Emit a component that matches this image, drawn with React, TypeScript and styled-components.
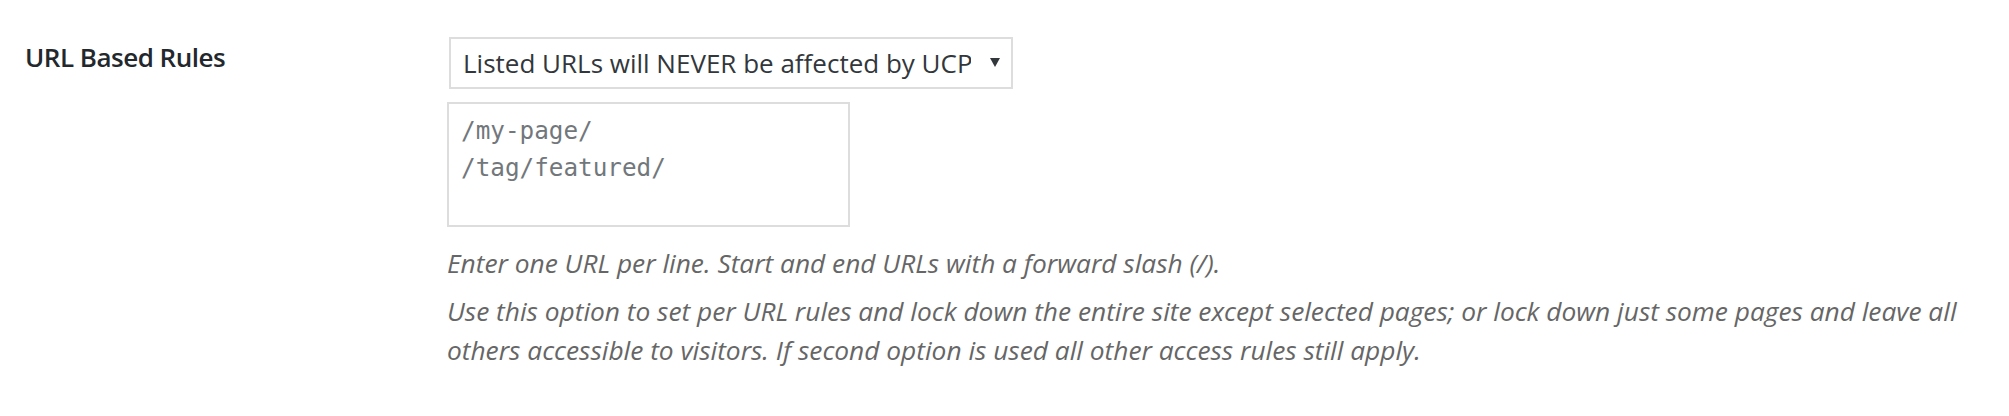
import React from "react";
import styled, { createGlobalStyle } from "styled-components";

const GlobalStyle = createGlobalStyle`
  html, body {
    margin: 0;
    padding: 0;
    background: #ffffff;
  }
  body {
    font-family: "Open Sans", "Noto Sans", sans-serif;
    -webkit-font-smoothing: antialiased;
  }
`;

const FormRow = styled.div`
  display: grid;
  grid-template-columns: 422px 1fr;
  padding: 37px 15px 0 25px;
  box-sizing: border-box;
  width: 2009px;
`;

const Label = styled.label`
  margin-top: 2px;
  font-family: "Open Sans", "Noto Sans", sans-serif;
  font-weight: 600;
  font-size: 26px;
  letter-spacing: -0.5px;
  line-height: 36px;
  color: #23282d;
`;

const Field = styled.div`
  display: flex;
  flex-direction: column;
  align-items: flex-start;
`;

const SelectWrap = styled.div`
  position: relative;
  margin-left: 2px;
  width: 564px;
`;

const Select = styled.select`
  appearance: none;
  -webkit-appearance: none;
  display: block;
  width: 100%;
  height: 52px;
  box-sizing: border-box;
  border: 2px solid #dddddd;
  border-radius: 0;
  background: #ffffff;
  padding: 0 40px 0 12px;
  margin: 0;
  font-family: "Open Sans", "Noto Sans", sans-serif;
  font-size: 26px;
  line-height: 36px;
  color: #32373c;
  outline: none;
`;

const Arrow = styled.svg`
  position: absolute;
  right: 13px;
  top: 20px;
  width: 10px;
  height: 10px;
  pointer-events: none;
`;

const Area = styled.textarea`
  display: block;
  width: 403px;
  height: 125px;
  box-sizing: border-box;
  margin: 13px 0 0 0;
  padding: 9px 12px;
  border: 2px solid #dddddd;
  border-radius: 0;
  background: #ffffff;
  resize: none;
  outline: none;
  font-family: "DejaVu Sans Mono", "Liberation Mono", monospace;
  font-size: 24.3px;
  line-height: 36.7px;
  color: #72777c;
  &::placeholder {
    color: #72777c;
    opacity: 1;
  }
`;

const Description = styled.p<{ $first?: boolean }>`
  margin: ${(p) => (p.$first ? "17px" : "10px")} 0 0 0;
  font-family: "Open Sans", "Noto Sans", sans-serif;
  font-style: italic;
  font-size: 26.3px;
  line-height: 38.3px;
  color: #666666;
`;

export default function App() {
  return (
    <>
      <GlobalStyle />
      <FormRow>
        <Label htmlFor="ucp-url-rules">URL Based Rules</Label>
        <Field>
          <SelectWrap>
            <Select id="ucp-url-rules" defaultValue="never">
              <option value="never">Listed URLs will NEVER be affected by UCP</option>
              <option value="only">ONLY listed URLs CAN be affected by UCP</option>
            </Select>
            <Arrow viewBox="0 0 10 10" aria-hidden="true">
              <polygon points="0,1 10,1 5,10" fill="#32373c" />
            </Arrow>
          </SelectWrap>
          <Area placeholder={"/my-page/\n/tag/featured/"} />
          <Description $first>
            Enter one URL per line. Start and end URLs with a forward slash (/).
          </Description>
          <Description>
            Use this option to set per URL rules and lock down the entire site except selected pages; or lock down just some pages and leave all others accessible to visitors. If second option is used all other access rules still apply.
          </Description>
        </Field>
      </FormRow>
    </>
  );
}
